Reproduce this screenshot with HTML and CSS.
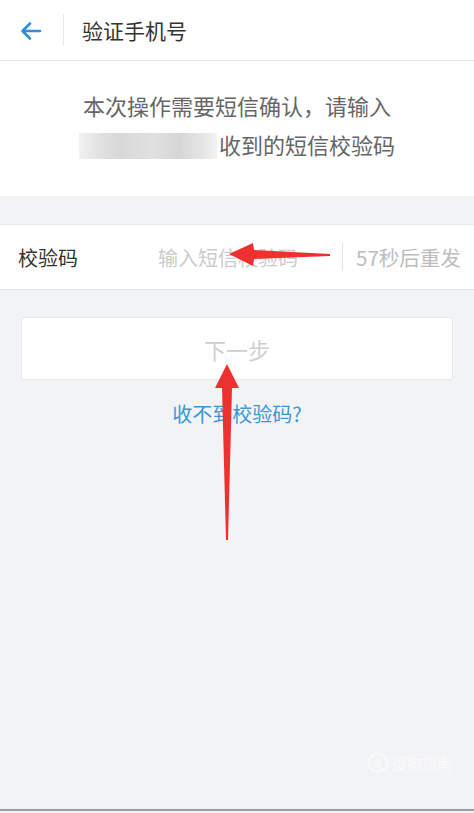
FILE: index.html
```html
<!DOCTYPE html>
<html>
<head>
    <title>验证手机号</title>
    <link rel="stylesheet" href="styles.css">
</head>
<body>
    <div class="page">
        <div class="header">
            <span class="back">
                <svg width="24" height="24" viewBox="0 0 24 24">
                    <path d="M21 12H4 M11 4.5L3.5 12L11 19.5" fill="none" stroke="#2f8fdc" stroke-width="2.6" stroke-linecap="round" stroke-linejoin="round"/>
                </svg>
            </span>
            <span class="header-divider"></span>
            <span class="title">验证手机号</span>
        </div>

        <div class="notice">
            <p>本次操作需要短信确认，请输入</p>
            <p><span class="masked"></span>收到的短信校验码</p>
        </div>

        <div class="code-row">
            <span class="label">校验码</span>
            <span class="placeholder">输入短信校验码</span>
            <span class="row-divider"></span>
            <span class="resend">57秒后重发</span>
        </div>

        <div class="actions">
            <div class="next-btn">下一步</div>
            <a class="help-link">收不到校验码?</a>
        </div>

        <div class="spacer"></div>
        <div class="watermark">
            <span class="wm-logo">S</span><span class="wm-text">搜狗指南</span>
        </div>
        <div class="bottom-line"></div>

        <!-- annotation arrows -->
        <svg class="marks" width="474" height="813" viewBox="0 0 474 813">
            <polygon points="330,254 254,250 253,243 229,254 253,266 254,259 330,256" fill="#ee3030"/>
            <polygon points="227,364 239,388 232,388 228,540 226,540 222,388 215,388" fill="#ee3030"/>
        </svg>
    </div>
</body>
</html>
```

FILE: styles.css
```css
body {
    margin: 0;
    font-family: "Noto Sans CJK SC", "Noto Sans", sans-serif;
    background: #f2f3f5;
}
.page {
    position: relative;
    height: 813px;
    display: flex;
    flex-direction: column;
    overflow: hidden;
}
.header {
    height: 60px;
    background: #fff;
    border-bottom: 1px solid #e6e6e6;
    display: flex;
    align-items: center;
}
.back { width: 24px; height: 24px; margin-left: 19px; margin-top: 2px; }
.header-divider {
    width: 1px;
    height: 32px;
    background: #e8e8e8;
    margin-left: 20px;
}
.title {
    margin-left: 18px;
    font-size: 21px;
    color: #333;
}
.notice {
    background: #fff;
    padding: 25px 0 32px;
    text-align: center;
    font-size: 22px;
    color: #666;
}
.notice p { margin: 0; line-height: 39px; }
.masked {
    display: inline-block;
    width: 138px;
    height: 26px;
    vertical-align: -5px;
    margin-right: 2px;
    background: linear-gradient(90deg, #f1f1f1 0px, #e2e2e2 20px, #d8d8d8 40px, #e0e0e0 75px, #d6d6d6 100px, #e6e6e6 125px, #f3f3f3 138px);
}
.code-row {
    margin-top: 28px;
    height: 64px;
    background: #fff;
    border-top: 1px solid #e8e8e8;
    border-bottom: 1px solid #e4e4e4;
    display: flex;
    align-items: center;
    font-size: 20px;
}
.label { margin-left: 18px; width: 140px; color: #333; }
.placeholder { color: #cbcbcb; width: 184px; }
.row-divider { width: 1px; height: 28px; background: #e2e2e2; }
.resend { margin-left: 13px; color: #bdbdbd; font-size: 20.5px; }
.actions {
    display: flex;
    flex-direction: column;
    align-items: center;
}
.next-btn {
    margin-top: 27px;
    width: 430px;
    height: 61px;
    background: #fff;
    border: 1px solid #e6e7e9;
    border-radius: 3px;
    display: flex;
    align-items: center;
    justify-content: center;
    font-size: 22px;
    color: #cfcfcf;
}
.help-link {
    margin-top: 19px;
    font-size: 20px;
    color: #3a98d6;
}
.spacer { flex: 1; }
.watermark {
    align-self: flex-end;
    margin: 0 22px 36px 0;
    display: flex;
    align-items: center;
    color: #fafafb;
    font-size: 15px;
}
.wm-logo {
    width: 16px;
    height: 16px;
    border-radius: 50%;
    border: 2px solid #fafafb;
    font-size: 12px;
    font-weight: bold;
    display: flex;
    align-items: center;
    justify-content: center;
    margin-right: 4px;
}
.bottom-line {
    height: 2px;
    background: #9c9c9c;
    margin-bottom: 2px;
}
.marks {
    position: absolute;
    top: 0;
    left: 0;
    pointer-events: none;
}
```
